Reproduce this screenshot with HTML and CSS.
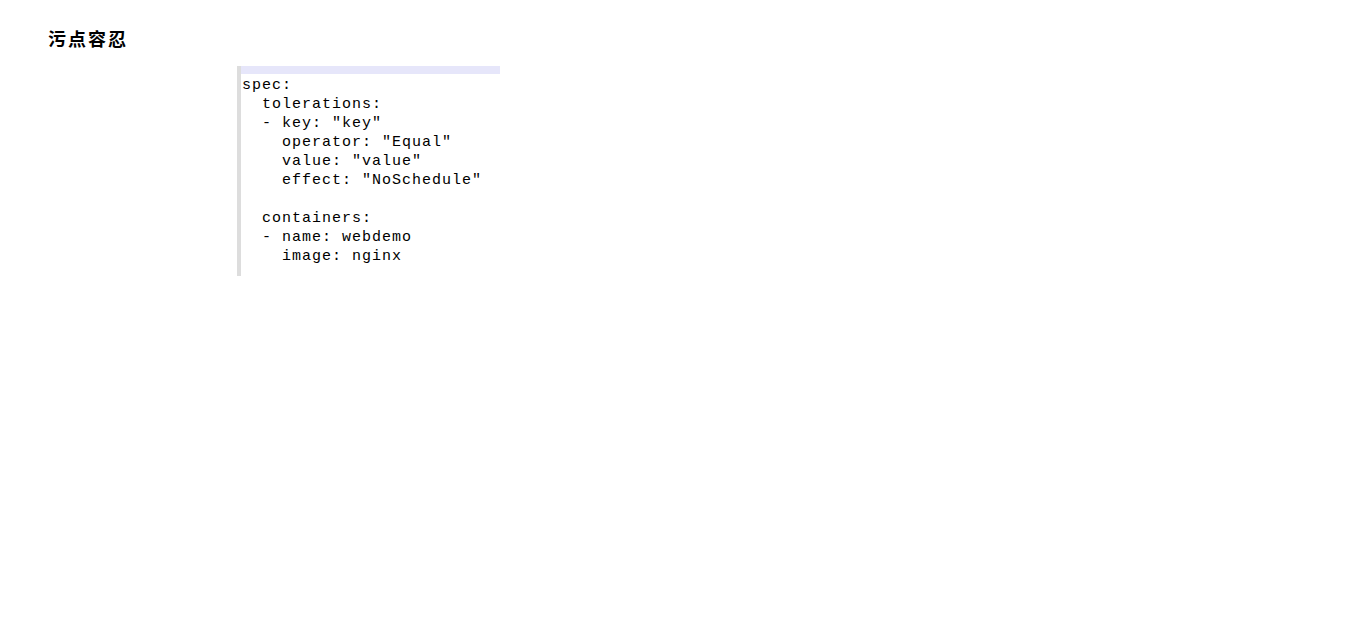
FILE: index.html
```html
<!DOCTYPE html>
<html>
<head>
<meta charset="utf-8">
<link rel="stylesheet" href="styles.css">
</head>
<body>
<div class="page">
  <h3 class="title">污点容忍</h3>
  <div class="code-wrap">
    <div class="code">
      <div class="code-head"></div>
<pre class="code-body">spec:
  tolerations:
  - key: "key"
    operator: "Equal"
    value: "value"
    effect: "NoSchedule"

  containers:
  - name: webdemo
    image: nginx
</pre>
    </div>
  </div>
</div>
</body>
</html>
```
FILE: styles.css
```css
html, body {
  margin: 0;
  padding: 0;
  background: #fff;
}
.page {
  padding: 26px 0 0 48px;
}
.title {
  margin: 0;
  font-family: "Noto Sans CJK SC", sans-serif;
  font-weight: 700;
  font-size: 18px;
  line-height: 24px;
  letter-spacing: 2px;
  color: #000;
}
.code-wrap {
  margin: 16px 0 0 189px;
}
.code {
  width: 259px;
  border-left: 4px solid #ddd;
  padding-bottom: 10px;
}
.code-head {
  height: 8px;
  background: #e6e6fa;
}
.code-body {
  margin: 0;
  padding: 2px 0 0 1px;
  font-family: "Liberation Mono", "Courier New", monospace;
  font-size: 15px;
  letter-spacing: 1px;
  line-height: 19px;
  color: #000;
}
```
